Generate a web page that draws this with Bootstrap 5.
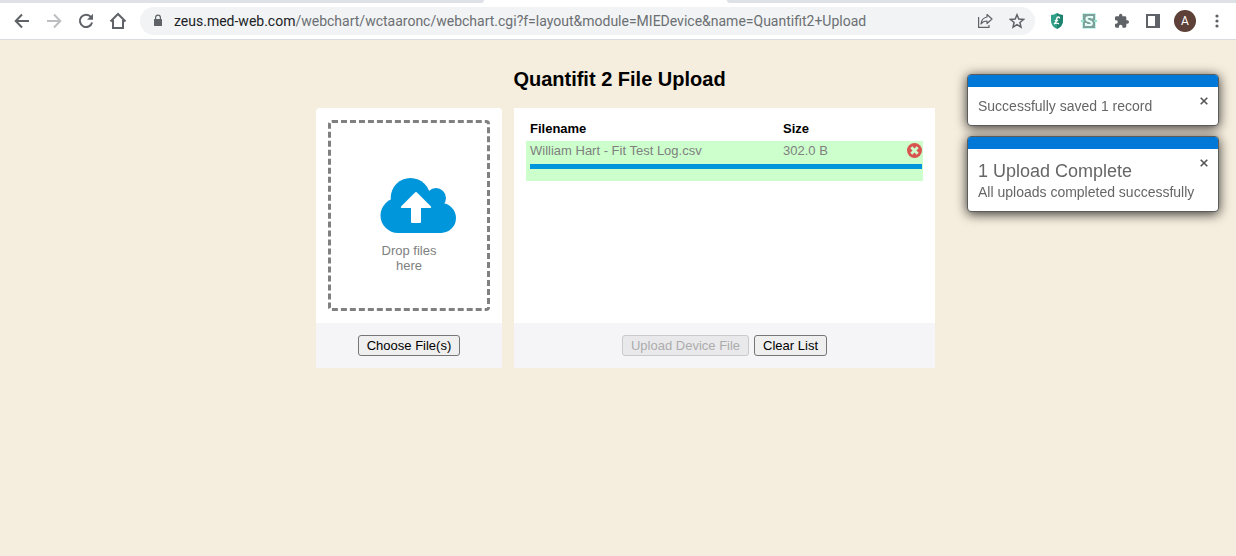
<!DOCTYPE html>
<html lang="en">
<head>
<meta charset="utf-8">
<meta name="viewport" content="width=device-width, initial-scale=1">
<title>Quantifit 2 File Upload</title>
<link href="https://cdn.jsdelivr.net/npm/bootstrap@5.3.0/dist/css/bootstrap.min.css" rel="stylesheet">
<style>
  body { background: #f5eddd; color: #808080; font: 13px/15px "Liberation Sans", Arial, sans-serif; }
  svg { display: block; flex: none; }
  button { font-family: inherit; }

  /* Browser chrome */
  .tab-strip { height: 3px; background: #fff; }
  .tab-strip span { background: #dee1e6; }
  .tab-left { width: 484px; border-bottom-right-radius: 3px; }
  .tab-gap { width: 243px; }
  .tab-right { border-bottom-left-radius: 3px; }
  .toolbar { height: 37px; background: #fff; border-bottom: 1px solid #d9dbdf; padding: 0 9px 0 12px; }
  .toolbar, .tool-group { gap: 12px; }
  .tool { border: 0; padding: 0; background: none; color: #5f6368; width: 20px; height: 20px; display: flex; align-items: center; justify-content: center; }
  .tool:disabled { color: #bcbec1; }
  .omnibox { height: 28px; border-radius: 14px; background: #f1f3f4; padding: 0 8px 0 10px; }
  .address { font: 14px/20px Roboto, "Open Sans", sans-serif; color: #6b6f73; white-space: nowrap; }
  .address b { font-weight: 400; color: #202124; }
  .avatar { width: 22px; height: 22px; border-radius: 50%; background: #5d4037; color: #fff; font: 12px/22px Roboto, sans-serif; border: 0; padding: 0; margin: 0 -1px; }

  /* Upload page */
  .uploader { max-width: 634px; padding: 26px 0 0 3px; }
  .page-title { font-size: 20px; line-height: 26px; font-weight: 700; color: #000; margin: 0 0 16px; }
  .panels { display: grid; grid-template-columns: 186px 1fr; gap: 12px; padding-left: 12px; }
  .panel { background: #fff; }
  .panel-drop { border-radius: 4px 4px 0 0; }
  .panel-body { min-height: 215px; padding: 12px; }
  .panel-foot { background: #f5f5f8; padding: 12px; gap: 5px; }
  .drop-zone { border: 3px dashed #808080; border-radius: 4px; min-height: 191px; padding: 18px 0 0 18px; }
  .drop-text { width: 60px; margin: 9px 18px 0 0; }
  .btn-plain { height: 21px; border: 1px solid #767676; border-radius: 3px; background: #efefef; color: #000; padding: 0 8px; font-size: 13px; line-height: 19px; }
  .btn-plain:disabled { color: #acacac; background: #e9e9eb; border-color: #cacacb; }
  .file-table { width: 100%; table-layout: fixed; }
  .file-table th { color: #000; padding: 1px 4px 5px; font-weight: 700; }
  .file-table td { background: #ccffcc; padding: 2px 4px 3px; vertical-align: top; }
  .file-table .cell-remove { padding: 2px 0 3px; }
  .file-table .cell-bar { padding: 3px 1px 12px 4px; }
  .col-size { width: 124px; }
  .col-remove { width: 20px; }
  .upload-bar { height: 5px; border-radius: 0; background: #fff; }
  .upload-bar .progress-bar { background: #0096db; }
  .remove { border: 0; padding: 0; background: none; }

  /* Notices */
  .notices { position: fixed; top: 74px; right: 17px; width: 252px; display: grid; gap: 10px; }
  .notice { background: #fff; border: 1px solid #5c5c5c; border-radius: 4px; box-shadow: 0 2px 12px rgba(0,0,0,.8); color: #666; overflow: hidden; font-size: 14px; line-height: 18px; }
  .notice-stripe { height: 12px; background: #0078d7; }
  .notice-body { padding: 10px; }
  .notice-body h2 { font-size: 18px; line-height: 22px; font-weight: 400; margin: 1px 0; }
  .notice-body p { margin: 0; }
  .notice-close { border: 0; background: none; padding: 0; color: #555; height: 8px; }
</style>
</head>
<body>
<header>
  <div class="tab-strip d-flex"><span class="tab-left"></span><div class="tab-gap"></div><span class="tab-right flex-fill"></span></div>
  <nav class="toolbar d-flex align-items-center" aria-label="Browser">
    <div class="tool-group d-flex">
      <button class="tool" aria-label="Back"><svg width="16" height="16" viewBox="0 0 16 16" fill="none" stroke="currentColor" stroke-width="2"><path d="M15 8H2.500M8 1.500 1.700 8 8 14.500"/></svg></button>
      <button class="tool" aria-label="Forward" disabled><svg width="16" height="16" viewBox="0 0 16 16" fill="none" stroke="currentColor" stroke-width="2"><path d="M1 8h12.500M8 1.500 14.300 8 8 14.500"/></svg></button>
      <button class="tool" aria-label="Reload"><svg width="16" height="16" viewBox="0 0 16 16"><path fill="none" stroke="currentColor" stroke-width="2" d="M13 4A6.200 6.200 0 1 0 14.100 9.500"/><path fill="currentColor" d="M15 .8v6H9z"/></svg></button>
      <button class="tool" aria-label="Home"><svg width="18" height="18" viewBox="0 0 18 18" fill="none" stroke="currentColor" stroke-width="2"><path d="M1.500 9.500 9 2l7.500 7.500M4 8v8h10V8"/></svg></button>
    </div>
    <div class="omnibox d-flex align-items-center flex-fill">
      <svg width="16" height="16" viewBox="0 0 16 16"><path fill="#5f6368" d="M5 6V4.500a3 3 0 0 1 6 0V6h.5q.5 0 .5.5v6q0 .5-.5.5h-7q-.5 0-.5-.5v-6q0-.5.500-.5zM6.200 6h3.600V4.500a1.800 1.800 0 0 0-3.600 0z"/></svg>
      <div class="address flex-fill ps-2"><b>zeus.med-web.com</b>/webchart/wctaaronc/webchart.cgi?f=layout&amp;module=MIEDevice&amp;name=Quantifit2+Upload</div>
      <div class="tool-group d-flex">
        <button class="tool" aria-label="Share"><svg width="16" height="16" viewBox="0 0 16 16" fill="none" stroke="currentColor" stroke-width="1.200"><path d="M1.600 4v10.400H12V12"/><path stroke-linejoin="round" d="M10 1.500 15 6l-5 4.500V8Q6 8 4 11q.5-6 6-7z"/></svg></button>
        <button class="tool" aria-label="Bookmark"><svg width="16" height="16" viewBox="0 0 16 16" fill="none" stroke="currentColor" stroke-width="1.500"><path d="m8 1.800 1.800 4.300 4.700.4-3.600 3 1.100 4.700L8 11.700l-4 2.500 1.100-4.700-3.600-3 4.700-.4z"/></svg></button>
      </div>
    </div>
    <div class="tool-group d-flex align-items-center">
      <button class="tool" aria-label="Shield extension"><svg width="14" height="16" viewBox="0 0 14 16"><path fill="#2fa087" d="M1 2q3 0 6-2 3 2 6 2v6q0 5-6 8-6-3-6-8z"/><path fill="#12705e" d="M7 0q3 2 6 2v6q0 5-6 8z" opacity=".6"/><path fill="none" stroke="#fff" stroke-width="1.300" d="M9.500 5.500q.2-1.700-1.300-1.500Q6.800 4.200 6.500 7 6.200 10.500 4 10.800q2-1.300 5 0M4.800 7.500h3.400"/></svg></button>
      <button class="tool" aria-label="S extension"><svg width="16" height="16" viewBox="0 0 16 16"><rect x="1.500" y=".5" width="13" height="15" rx="1" fill="#7f9f9a" stroke="#c4f5ea"/><path d="M0 8h3M13 8h3" stroke="#8fe0cf" stroke-width="2"/><path fill="none" stroke="#e6fff8" stroke-width="2.200" d="M11 5.500V4H8Q5.500 4 5.500 5.800T8 8t2.800 2.200T8.500 12H5v-2"/></svg></button>
      <button class="tool" aria-label="Extensions"><svg width="16" height="16" viewBox="0 0 24 24"><path fill="currentColor" d="M21.500 11H20V7a2 2 0 0 0-2-2h-4V3.500a2.500 2.500 0 0 0-5 0V5H5a2 2 0 0 0-2 2v3.800h1.500a2.700 2.700 0 0 1 0 5.400H3V20a2 2 0 0 0 2 2h3.800v-1.500a2.700 2.700 0 0 1 5.400 0V22H18a2 2 0 0 0 2-2v-4h1.500a2.500 2.500 0 0 0 0-5z"/></svg></button>
      <button class="tool" aria-label="Side panel"><svg width="14" height="14" viewBox="0 0 14 14"><path fill="currentColor" fill-rule="evenodd" d="M0 0h14v14H0zM2 2v10h7V2z"/></svg></button>
      <button class="avatar" aria-label="Profile">A</button>
      <button class="tool" aria-label="Menu"><svg width="4" height="14" viewBox="0 0 4 14" fill="currentColor"><circle cx="2" cy="2" r="1.600"/><circle cx="2" cy="7" r="1.600"/><circle cx="2" cy="12" r="1.600"/></svg></button>
    </div>
  </nav>
</header>

<main class="uploader mx-auto">
  <h1 class="page-title text-center">Quantifit 2 File Upload</h1>
  <div class="panels">
    <section class="panel panel-drop">
      <div class="panel-body">
        <div class="drop-zone d-flex flex-column align-items-center justify-content-center">
          <svg width="76" height="57" viewBox="0 0 76 57"><g fill="#0096db"><circle cx="30.500" cy="20.800" r="19.800"/><circle cx="56" cy="21" r="10"/><circle cx="18" cy="38.500" r="17.500"/><circle cx="61" cy="41" r="15"/><path d="M18 56V28l12-12h16l7 6 9 6v28z"/></g><path fill="#fff" d="M35 15.500q1-1 2 0L51 29.500q.8 1.500-1 1.500h-9v14q0 1-1 1h-8q-1 0-1-1V31h-9q-1.800 0-1-1.500z"/></svg>
          <div class="drop-text text-center">Drop files here</div>
        </div>
      </div>
      <div class="panel-foot d-flex justify-content-center"><button class="btn-plain">Choose File(s)</button></div>
    </section>
    <section class="panel">
      <div class="panel-body">
        <table class="file-table">
          <colgroup><col><col class="col-size"><col class="col-remove"></colgroup>
          <thead><tr><th>Filename</th><th>Size</th><th aria-label="Remove"></th></tr></thead>
          <tbody>
            <tr>
              <td>William Hart - Fit Test Log.csv</td><td>302.0 B</td>
              <td class="cell-remove"><button class="remove d-block ms-auto" aria-label="Remove file"><svg width="16" height="15" viewBox="0 0 16 15"><circle cx="7.500" cy="7.500" r="7.500" fill="#d9534f"/><path stroke="#ccffcc" stroke-width="2.800" d="m4.300 4.300 6.400 6.400m0-6.400-6.400 6.400"/></svg></button></td>
            </tr>
            <tr><td class="cell-bar" colspan="3"><div class="progress upload-bar" role="progressbar" aria-label="Upload progress" aria-valuenow="100" aria-valuemin="0" aria-valuemax="100"><div class="progress-bar" style="width:100%"></div></div></td></tr>
          </tbody>
        </table>
      </div>
      <div class="panel-foot d-flex justify-content-center"><button class="btn-plain" disabled>Upload Device File</button><button class="btn-plain">Clear List</button></div>
    </section>
  </div>
</main>

<aside class="notices" aria-live="polite">
  <div class="notice">
    <div class="notice-stripe"></div>
    <div class="notice-body d-flex justify-content-between">
      <p>Successfully saved 1 record</p>
      <button class="notice-close" aria-label="Close"><svg width="8" height="8" viewBox="0 0 8 8" stroke="currentColor" stroke-width="1.600"><path d="m.7.700 6.600 6.600m0-6.600L.7 7.300"/></svg></button>
    </div>
  </div>
  <div class="notice">
    <div class="notice-stripe"></div>
    <div class="notice-body d-flex justify-content-between">
      <div><h2>1 Upload Complete</h2><p>All uploads completed successfully</p></div>
      <button class="notice-close" aria-label="Close"><svg width="8" height="8" viewBox="0 0 8 8" stroke="currentColor" stroke-width="1.600"><path d="m.7.700 6.600 6.600m0-6.600L.7 7.300"/></svg></button>
    </div>
  </div>
</aside>
<script src="https://cdn.jsdelivr.net/npm/bootstrap@5.3.0/dist/js/bootstrap.bundle.min.js"></script>
</body>
</html>
